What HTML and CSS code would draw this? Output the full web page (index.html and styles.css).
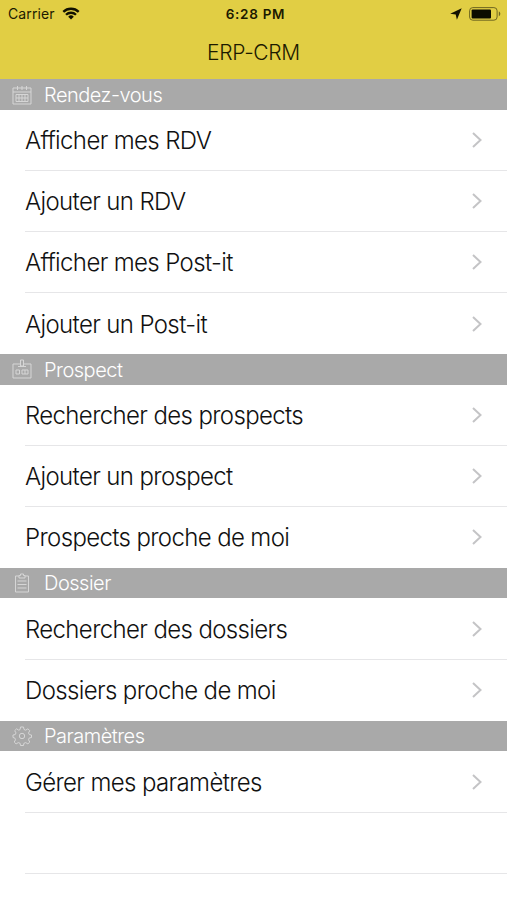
FILE: index.html
```
<!DOCTYPE html>
<html lang="fr">

<head>
  <meta charset="utf-8">
  <title>ERP-CRM</title>
  <link rel="stylesheet" href="styles.css">
</head>

<body>
  <svg class="symbols" width="0" height="0">
    <symbol id="chevron" viewBox="0 0 12 18">
      <path d="M2 2l7.500 7L2 16" fill="none" stroke="#c4c4c6" stroke-width="2" />
    </symbol>
  </svg>

  <header class="header">
    <div class="status">
      <div class="status-left">
        <span class="carrier">Carrier</span>
        <svg class="wifi" width="18" height="13" viewBox="0 0 18 13">
          <g fill="none" stroke="#111100" stroke-width="2.3">
            <path d="M1.3 4.9a11 11 0 0 1 15.4 0" />
            <path d="M4 7.8a7.1 7.1 0 0 1 10 0" />
          </g>
          <path d="M9 12.6L6.2 9.7a4 4 0 0 1 5.6 0z" fill="#111100" />
        </svg>
      </div>
      <span class="clock">6:28 PM</span>
      <div class="status-right">
        <svg width="12" height="12" viewBox="0 0 12 12">
          <path d="M11.700 .3L6.900 11.800 5.700 6.400 .2 5.700z" fill="#111100" />
        </svg>
        <svg class="battery" width="32" height="14" viewBox="0 0 32 14">
          <rect x=".6" y=".6" width="27.5" height="12.600" rx="3.2" fill="none" stroke="#6f6620" stroke-width="1" />
          <rect x="2.600" y="2.400" width="19.400" height="9" rx="1" fill="#0c0c00" />
          <path d="M29.800 4.600c2 .7 2 4 0 4.700z" fill="#6f6620" />
        </svg>
      </div>
    </div>
    <h1 class="title">ERP-CRM</h1>
  </header>

  <main>
    <h2 class="section">
      <svg class="section-icon" viewBox="0 0 20 20">
        <path d="M1 3h18v16H1zM1 7h18M5.500 1v4M10 1v4M14.500 1v4" />
        <path d="M4 9.500h12v7H4zM4 13h12M7 9.500v7M10 9.500v7M13 9.500v7" />
      </svg>
      <span>Rendez-vous</span>
    </h2>
    <ul class="list">
      <li class="row"><span class="label">Afficher mes RDV</span><svg class="chevron"><use href="#chevron" /></svg></li>
      <li class="row"><span class="label">Ajouter un RDV</span><svg class="chevron"><use href="#chevron" /></svg></li>
      <li class="row"><span class="label">Afficher mes Post-it</span><svg class="chevron"><use href="#chevron" /></svg></li>
      <li class="row"><span class="label">Ajouter un Post-it</span><svg class="chevron"><use href="#chevron" /></svg></li>
    </ul>

    <h2 class="section">
      <svg class="section-icon" viewBox="0 0 20 20">
        <path d="M8 5H1v14h18V5h-7M8.500 1h3v6h-3zM6 7.500h8" />
        <path d="M4 11h3.500v4H4zM10 11h6v4h-6zM13 11v4" />
      </svg>
      <span>Prospect</span>
    </h2>
    <ul class="list">
      <li class="row"><span class="label">Rechercher des prospects</span><svg class="chevron"><use href="#chevron" /></svg></li>
      <li class="row"><span class="label">Ajouter un prospect</span><svg class="chevron"><use href="#chevron" /></svg></li>
      <li class="row"><span class="label">Prospects proche de moi</span><svg class="chevron"><use href="#chevron" /></svg></li>
    </ul>

    <h2 class="section">
      <svg class="section-icon" viewBox="0 0 20 20">
        <path d="M7 3H3.500v16h13V3H13M7 5V2.500h1.500V1h3v1.500H13V5z" />
        <path d="M5.500 8h9M5.500 11.500h9M5.500 15h9" />
      </svg>
      <span>Dossier</span>
    </h2>
    <ul class="list">
      <li class="row"><span class="label">Rechercher des dossiers</span><svg class="chevron"><use href="#chevron" /></svg></li>
      <li class="row"><span class="label">Dossiers proche de moi</span><svg class="chevron"><use href="#chevron" /></svg></li>
    </ul>

    <h2 class="section">
      <svg class="section-icon" viewBox="0 0 20 20">
        <path d="M8.500 1h3l.5 2.500 1.700.7 2.200-1.400 1.900 1.900-1.300 2.200.8 1.700 2.200.4v2.500l-2.300.5-.7 1.800 1.300 2.200-1.900 1.900-2.200-1.300-1.800.7-.4 2.200h-3l-.4-2.200-1.800-.7-2.200 1.300-1.900-1.900 1.300-2.200-.7-1.800L1 11.500V9l2.200-.4.8-1.700-1.300-2.200 1.900-1.900 2.200 1.400 1.300-.7z" />
        <circle cx="10" cy="10" r="2.700" />
      </svg>
      <span>Paramètres</span>
    </h2>
    <ul class="list">
      <li class="row"><span class="label">Gérer mes paramètres</span><svg class="chevron"><use href="#chevron" /></svg></li>
      <li class="row"></li>
    </ul>
  </main>
</body>

</html>
```
FILE: styles.css
```
* {
  margin: 0;
  padding: 0;
  box-sizing: border-box;
}

body {
  font-family: Inter, "Liberation Sans", sans-serif;
  font-weight: 300;
  background: #fff;
  color: #111;
  overflow: hidden;
}

.symbols {
  display: none;
}

.header {
  height: 79.3px;
  background: #e1ce44;
  color: #1c1a00;
}

.status {
  display: grid;
  grid-template-columns: 1fr auto 1fr;
  align-items: center;
  height: 27px;
  padding: 0 6px 0 8px;
}

.status-left {
  display: flex;
  align-items: center;
  gap: 7px;
}

.carrier {
  font-size: 14px;
  font-weight: 400;
  letter-spacing: 0.1px;
}

.clock {
  padding-left: 2px;
  font-size: 13.5px;
  font-weight: 600;
  letter-spacing: 0.7px;
}

.status-right {
  display: flex;
  align-items: center;
  justify-content: flex-end;
  gap: 7px;
}

.title {
  font-size: 21px;
  font-weight: 300;
  letter-spacing: -0.3px;
  line-height: 52px;
  text-align: center;
}

.section {
  display: flex;
  align-items: center;
  height: 30.5px;
  padding-left: 12px;
  gap: 12px;
  background: #a9a9a9;
  color: #fff;
  font-size: 20px;
  font-weight: 300;
  letter-spacing: -0.5px;
}

.section span {
  padding-top: 0.5px;
}

.section-icon {
  width: 20px;
  height: 20px;
  fill: none;
  stroke: #d6d6d6;
  stroke-width: 1;
}

.list {
  list-style: none;
}

.row {
  display: flex;
  align-items: center;
  justify-content: space-between;
  height: 61.1px;
  margin-left: 25px;
  padding-right: 24px;
  border-bottom: 1px solid #e6e6e8;
}

.list:not(:last-child) .row:last-child {
  border-bottom: none;
}

.list:last-child .row:first-child {
  height: 61.8px;
}

.label {
  padding-top: 1px;
  font-size: 24px;
  letter-spacing: -0.63px;
  white-space: nowrap;
}

.chevron {
  width: 12px;
  height: 18px;
}
```
